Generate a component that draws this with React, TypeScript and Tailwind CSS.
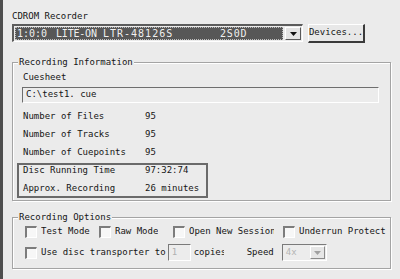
import React from 'react';

const face = "font-['DejaVu_Sans_Mono','Liberation_Mono',monospace]";

function CheckBox() {
  return (
    <span className="w-[12px] h-[12px] shrink-0 bg-[#f7f7f7] border-t-2 border-l-2 border-[#7c7c7c] border-b border-r border-b-white border-r-white" />
  );
}

function Option({ label, className, clip }: { label: string; className: string; clip?: string }) {
  return (
    <div className={`flex items-center shrink-0 ${className}`}>
      <CheckBox />
      <span className={`ml-[4px] shrink-0 whitespace-nowrap overflow-hidden ${clip ?? ''}`}>{label}</span>
    </div>
  );
}

function GroupBox({ title, className, children }: { title: string; className: string; children: React.ReactNode }) {
  return (
    <div className={`relative border border-[#a4a4a4] shadow-[inset_1px_1px_0_#ffffff,1px_1px_0_#ffffff] ${className}`}>
      <span className="absolute left-[5px] -top-[7px] h-[12px] leading-[12px] bg-[#ebebeb] px-[1px]">
        {title}
      </span>
      {children}
    </div>
  );
}

function Row({ label, value }: { label: string; value: string }) {
  return (
    <div className="flex h-[18px] items-center">
      <span className="w-[122px] shrink-0 whitespace-pre">{label}</span>
      <span>{value}</span>
    </div>
  );
}

export default function App() {
  return (
    <div className={`w-[400px] h-[279px] overflow-hidden bg-[#ebebeb] border-l-[3px] border-[#4e4e4e] pl-[9px] pt-[10px] text-[9px] text-[#151515] ${face}`}>
      <div className="h-[12px] leading-[12px]">CDROM Recorder</div>

      <div className="flex mt-[2px] h-[18px]">
        <div className="flex w-[291px] h-[18px] bg-[#ebebeb] border-t-2 border-l-2 border-[#5c5c5c] border-b border-r border-b-white border-r-white">
          <div className="flex items-center flex-1 min-w-0 overflow-hidden m-[1px] mr-[2px] bg-[#575757] outline-1 outline-dotted outline-offset-[-1px] outline-[#bdbdbd] text-[#f0f0f0] text-[10px] whitespace-pre">
            <span className="ml-[2px] w-[39px] shrink-0">1:0:0</span>
            <span className="w-[47px] shrink-0 tracking-[-0.2px]">LITE-ON</span>
            <span className="w-[117px] shrink-0 tracking-[1px]">LTR-48126S</span>
            <span className="shrink-0 tracking-[0.8px]">2S0D</span>
          </div>
          <div className="flex items-center justify-center w-[16px] shrink-0 my-[1px] mr-[1px] bg-[#e4e4e4] border-t border-l border-white border-b border-r border-b-[#5a5a5a] border-r-[#5a5a5a]">
            <svg width="7" height="4" viewBox="0 0 7 4"><path d="M0 0h7L3.5 4z" fill="#111" /></svg>
          </div>
        </div>
        <div className="ml-[5px] w-[57px] h-[19px] flex items-center justify-center bg-[#e8e8e8] border-t border-l border-white border-b-2 border-r-2 border-b-[#3a3a3a] border-r-[#3a3a3a]">
          Devices...
        </div>
      </div>

      <GroupBox title="Recording Information" className="mt-[20px] w-[379px] h-[139px] pl-[10px] pt-[8px]">
        <div className="h-[12px] leading-[12px]">Cuesheet</div>
        <div className="mt-[4px] -ml-[1px] w-[357px] h-[16px] flex items-center pl-[3px] bg-[#ececec] border-t border-l border-[#6e6e6e] border-b border-r border-b-white border-r-white">
          C:\test1. cue
        </div>
        <div className="mt-[5px]">
          <Row label="Number of Files" value="95" />
          <Row label="Number of Tracks" value="95" />
          <Row label="Number of Cuepoints" value="95" />
        </div>
        <div className="mt-[1px] -ml-[6px] w-[191px] border-2 border-[#6a6a6a] pl-[4px] pb-[1px]">
          <div className="flex h-[12px] items-center">
            <span className="w-[122px] shrink-0">Disc Running Time</span>
            <span>97:32:74</span>
          </div>
          <div className="flex h-[12px] items-center mt-[6px]">
            <span className="w-[122px] shrink-0">Approx. Recording</span>
            <span>26 minutes</span>
          </div>
        </div>
      </GroupBox>

      <GroupBox title="Recording Options" className="mt-[16px] w-[379px] h-[52px] pl-[12px] pt-[7px]">
        <div className="flex h-[14px]">
          <Option label="Test Mode" className="w-[74px]" />
          <Option label="Raw Mode" className="w-[74px]" />
          <Option label="Open New Session" className="w-[110px]" clip="w-[85px]" />
          <Option label="Underrun Protect" className="" />
        </div>
        <div className="flex items-center h-[17px] mt-[5px]">
          <CheckBox />
          <span className="ml-[4px] shrink-0 whitespace-nowrap">Use disc transporter to</span>
          <div className="ml-[2px] w-[23px] h-[17px] shrink-0 flex items-center pl-[3px] text-[#b0b0b0] bg-[#ececec] border-t border-l border-[#7a7a7a] border-b border-r border-b-white border-r-white">
            1
          </div>
          <span className="ml-[3px] w-[30px] shrink-0 overflow-hidden whitespace-nowrap">copies</span>
          <span className="ml-[23px] shrink-0">Speed</span>
          <div className="ml-[8px] w-[45px] h-[17px] shrink-0 flex bg-[#ececec] border-t border-l border-[#7a7a7a] border-b border-r border-b-white border-r-white">
            <span className="flex-1 pl-[3px] flex items-center text-[#b4b4b4]">4x</span>
            <div className="w-[15px] m-[1px] flex items-center justify-center bg-[#e6e6e6] border-t border-l border-white border-b border-r border-b-[#8a8a8a] border-r-[#8a8a8a]">
              <svg width="7" height="4" viewBox="0 0 7 4"><path d="M0 0h7L3.5 4z" fill="#a0a0a0" /></svg>
            </div>
          </div>
        </div>
      </GroupBox>
    </div>
  );
}
